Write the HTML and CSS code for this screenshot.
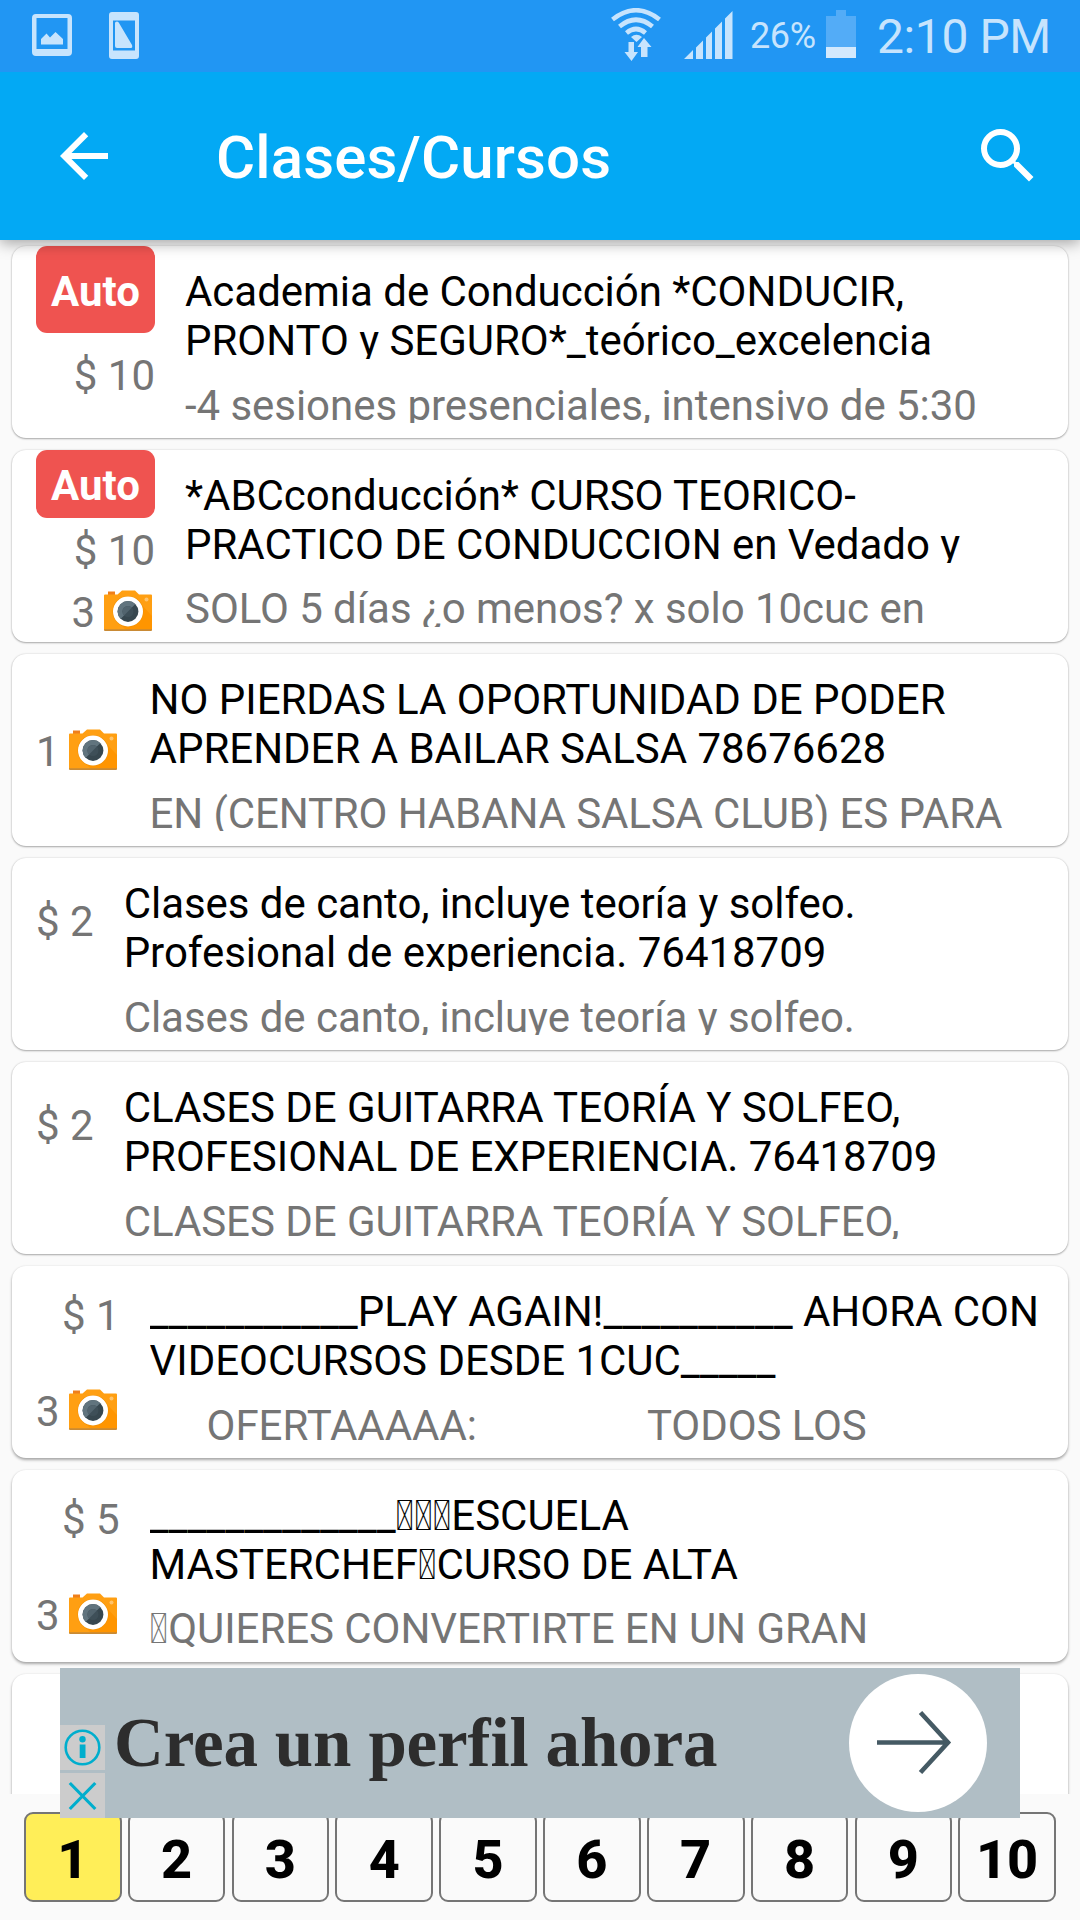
FILE: index.html
```html
<!DOCTYPE html>
<html lang="es">
<head>
<meta charset="utf-8">
<title>Clases/Cursos</title>
<link rel="stylesheet" href="styles.css">
</head>
<body>
<svg class="defs" width="0" height="0" aria-hidden="true">
  <symbol id="camera" viewBox="0 0 48 41">
    <path d="M4 1.500h7v4H4z" fill="#ef7f1a"/>
    <path d="M1 4.500h12.500L18 .5h13l4 4h12a1 1 0 0 1 1 1V40H0V5.500a1 1 0 0 1 1-1z" fill="#ff9f12"/>
    <path d="M35 12l13 14v14H22l-8-8z" fill="#ff9500"/>
    <path d="M0 39.300h48v.7q0 1-1 1H1q-1 0-1-1z" fill="#c98a35"/>
    <circle cx="42.500" cy="9.500" r="2" fill="#ffc36b"/>
    <circle cx="24" cy="21.500" r="15.500" fill="#f39000"/>
    <circle cx="24" cy="21.500" r="15" fill="#fff"/>
    <circle cx="24" cy="21.500" r="10.400" fill="#37474f"/>
    <path d="M16.600 28.900A10.400 10.400 0 0 1 31.400 14.100z" fill="#61747e"/>
    <circle cx="24" cy="21.500" r="5.500" fill="#3e4f58"/>
    <path d="M20.100 25.400A5.500 5.500 0 0 1 27.900 17.600z" fill="#52646e"/>
  </symbol>
</svg>

<header class="top">
  <div class="status">
    <svg class="ic-photo" width="40" height="42" viewBox="0 0 40 42"><path fill-rule="evenodd" d="M4 0h32a4 4 0 0 1 4 4v34a4 4 0 0 1-4 4H4a4 4 0 0 1-4-4V4a4 4 0 0 1 4-4zM4.500 4v31h31V4z"/><path d="M9 30.500V25l5.500-5.500 3.500 4 5.500-5.500L31 25v5.500z"/></svg>
    <svg class="ic-phone" width="30" height="47" viewBox="0 0 30 47"><path fill-rule="evenodd" d="M3 0h24a3 3 0 0 1 3 3v41a3 3 0 0 1-3 3H3a3 3 0 0 1-3-3V3a3 3 0 0 1 3-3zM4 8.500v30h22v-30z"/><path d="M6 11q0-1.500 2-1.500 1.500 0 2 1.500L23 33q.8 3-1 3H8q-2 0-2-2z"/></svg>
    <svg class="ic-wifi" width="50" height="53" viewBox="0 0 50 53"><g fill="none" stroke="#c7e4fd" stroke-width="4.600"><path d="M1.500 11.500Q25-7 48.500 11.500"/><path d="M8.500 18.500Q25 5 41.500 18.500"/><path d="M15.500 25Q25 17 34.500 25"/></g><path d="M20 29q5.500-4.500 11 0l-5.500 5zM17.500 34h5.500v10h4l-6.500 9-7-9h4z"/><path d="M30 49V39h-3.500l6.500-9 7.500 9H36.500v10z"/></svg>
    <svg class="ic-signal" width="49" height="48" viewBox="0 0 49 48"><path d="M0 48l9-9v9zM12 48V36.500l7-7V48zM22 48V26.500l6-6V48zM31 48V17.500l7-7V48zM41 48V7.500L48.500 0v48z"/></svg>
    <span class="battery-pct">26%</span>
    <svg class="ic-battery" width="30" height="48" viewBox="0 0 30 48"><path fill="#53acf7" d="M10 0h10v6h10v31H0V6h10z"/><path fill="#d3e9fd" d="M0 37h30v11H0z"/></svg>
    <time class="clock">2:10 PM</time>
  </div>
  <div class="appbar">
    <svg width="72" height="72" viewBox="0 0 24 24"><path d="M20 11H7.830l5.590-5.590L12 4l-8 8 8 8 1.410-1.410L7.830 13H20v-2z"/></svg>
    <h1>Clases/Cursos</h1>
    <svg width="72" height="72" viewBox="0 0 24 24"><path d="M15.500 14h-.79l-.28-.27A6.471 6.471 0 0 0 16 9.500 6.500 6.500 0 1 0 9.500 16c1.610 0 3.090-.59 4.230-1.570l.27.28v.79l5 4.990L20.490 19l-4.990-5zm-6 0C7.010 14 5 11.990 5 9.500S7.010 5 9.500 5 14 7.010 14 9.500 11.990 14 9.500 14z"/></svg>
  </div>
</header>

<main class="list">
  <article class="card">
    <div class="meta"><span class="badge badge-tall">Auto</span><span class="price price-mid">$ 10</span></div>
    <div class="body"><h2>Academia de Conducción *CONDUCIR,<br>PRONTO y SEGURO*_teórico_excelencia</h2><p>-4 sesiones presenciales, intensivo de 5:30</p></div>
  </article>
  <article class="card">
    <div class="meta"><span class="badge">Auto</span><span class="price price-snug">$ 10</span><span class="photos photos-snug">3<svg><use href="#camera"/></svg></span></div>
    <div class="body"><h2>*ABCconducción* CURSO TEORICO-<br>PRACTICO DE CONDUCCION en Vedado y</h2><p class="raised">SOLO 5 días ¿o menos? x solo 10cuc en</p></div>
  </article>
  <article class="card">
    <div class="meta"><span class="photos photos-only">1<svg><use href="#camera"/></svg></span></div>
    <div class="body"><h2>NO PIERDAS LA OPORTUNIDAD DE PODER<br>APRENDER A BAILAR SALSA 78676628</h2><p class="tight">EN (CENTRO HABANA SALSA CLUB) ES PARA</p></div>
  </article>
  <article class="card">
    <div class="meta"><span class="price price-only">$ 2</span></div>
    <div class="body"><h2>Clases de canto, incluye teoría y solfeo.<br>Profesional de experiencia. 76418709</h2><p>Clases de canto, incluye teoría y solfeo.</p></div>
  </article>
  <article class="card">
    <div class="meta"><span class="price price-only">$ 2</span></div>
    <div class="body"><h2>CLASES DE GUITARRA TEORÍA Y SOLFEO,<br>PROFESIONAL DE EXPERIENCIA. 76418709</h2><p>CLASES DE GUITARRA TEORÍA Y SOLFEO,</p></div>
  </article>
  <article class="card low">
    <div class="meta"><span class="price price-top">$ 1</span><span class="photos photos-low">3<svg><use href="#camera"/></svg></span></div>
    <div class="body"><h2>___________PLAY AGAIN!__________ AHORA CON<br>VIDEOCURSOS DESDE 1CUC_____</h2><p><span class="offer">OFERTAAAAA:</span><span>TODOS LOS</span></p></div>
  </article>
  <article class="card low">
    <div class="meta"><span class="price price-top">$ 5</span><span class="photos photos-low">3<svg><use href="#camera"/></svg></span></div>
    <div class="body"><h2>_____________&#xE000;&#xE000;&#xE000;ESCUELA<br>MASTERCHEF&#xE000;CURSO DE ALTA</h2><p class="raised">&#xE000;QUIERES CONVERTIRTE EN UN GRAN</p></div>
  </article>
  <article class="card low"></article>
</main>

<nav class="pager">
  <a class="page current">1</a><a class="page">2</a><a class="page">3</a><a class="page">4</a><a class="page">5</a><a class="page">6</a><a class="page">7</a><a class="page">8</a><a class="page">9</a><a class="page">10</a>
</nav>

<aside class="ad">
  <div class="ad-choices">
    <svg width="45" height="45" viewBox="0 0 45 45"><circle cx="22.500" cy="22.500" r="16.800" fill="none" stroke="#00aecd" stroke-width="2.600"/><circle cx="22.500" cy="14.200" r="3.200" fill="#00aecd"/><path d="M19.700 19.500h5.800V33h-5.800z" fill="#00aecd"/></svg>
    <svg width="45" height="45" viewBox="0 0 45 45"><path d="M9.800 10l25.500 26M35.300 10L9.800 36" stroke="#00aecd" stroke-width="3.200" fill="none"/></svg>
  </div>
  <span class="ad-text">Crea un perfil ahora</span>
  <svg class="ad-go" width="138" height="138" viewBox="0 0 138 138"><circle cx="69" cy="69" r="69" fill="#fff"/><path d="M28 68.500h72M71.500 38.500L99 68.500l-27.500 30" fill="none" stroke="#455a64" stroke-width="4.600"/></svg>
</aside>
</body>
</html>
```
FILE: styles.css
```css
* { box-sizing: border-box; }

body {
  margin: 0;
  width: 1080px;
  height: 1920px;
  position: relative;
  overflow: hidden;
  display: flex;
  flex-direction: column;
  background: #fafafa;
  font-family: Roboto, sans-serif;
  font-size: 42px;
  line-height: 49px;
}

.defs { position: absolute; }

.top {
  flex: none;
  position: relative;
  z-index: 1;
  box-shadow: 0 3px 14px rgba(0, 0, 0, .36);
}

.status {
  display: flex;
  align-items: flex-start;
  height: 72px;
  padding-left: 32px;
  background: #2196f3;
  color: #c7e4fd;
  fill: #c7e4fd;
}
.status > * { flex: none; }
.ic-photo { margin-top: 14px; }
.ic-phone { margin: 12px 0 0 37px; }
.ic-wifi { margin: 8px 0 0 472px; }
.ic-signal { margin: 11px 0 0 23px; }
.battery-pct { width: 67px; margin: 12px 0 0 17px; font-size: 36px; letter-spacing: -.4px; }
.ic-battery { margin: 10px 0 0 9px; }
.clock { margin: 12px 0 0 21px; font-size: 48px; letter-spacing: -.4px; white-space: nowrap; }

.appbar {
  display: flex;
  align-items: center;
  height: 168px;
  padding: 0 36px 0 48px;
  background: #03a9f4;
  color: #fff;
  fill: #fff;
}
.appbar h1 {
  flex: 1;
  margin: 4px 0 0 96px;
  font-size: 60px;
  font-weight: 500;
  letter-spacing: .12px;
  line-height: 70px;
}

.list {
  flex: none;
  height: 1554px;
  padding: 6px 12px 0;
  display: flex;
  flex-direction: column;
  gap: 12px;
  overflow: hidden;
}
.card {
  flex: none;
  display: flex;
  gap: 30px;
  height: 192px;
  padding: 0 24px;
  border-radius: 14px;
  background: #fff;
  box-shadow: 0 1px 2px rgba(0, 0, 0, .3), 0 0 2px rgba(0, 0, 0, .16);
}
.card.low { box-shadow: 0 2px 3px rgba(0, 0, 0, .32), 0 0 2px rgba(0, 0, 0, .1); }

.meta {
  display: flex;
  flex-direction: column;
  align-items: flex-end;
  color: #757575;
}
.badge {
  width: 119px;
  height: 68px;
  border-radius: 11px;
  background: #ef5350;
  color: #fff;
  font-weight: 700;
  line-height: 71px;
  text-align: center;
}
.badge-tall { height: 87px; line-height: 92px; }
.price-mid { margin-top: 18px; }
.price-snug { margin-top: 8px; }
.price-only { margin-top: 39px; }
.price-top { margin-top: 25px; }
.photos { display: flex; }
.photos svg { width: 48px; height: 41px; margin: 2px 3px 0 9px; }
.photos-snug { margin-top: 13px; }
.photos-only { margin-top: 73px; }
.photos-low { margin-top: 47px; }

.body { flex: 1; padding-top: 21px; white-space: nowrap; }
.body h2 {
  height: 92px;
  margin: 0;
  overflow: hidden;
  font-size: 42px;
  font-weight: 400;
  letter-spacing: -.03px;
  color: #000;
}
.body p {
  height: 42px;
  margin: 22px 0 0;
  overflow: hidden;
  letter-spacing: -.05px;
  color: #757575;
}
.body .raised { height: 43px; margin-top: 21px; }
.body .tight { letter-spacing: -.13px; }
.offer { margin: 0 170px 0 57px; }

.pager {
  display: flex;
  gap: 6.200px;
  padding: 18px 24px;
}
.page {
  flex: 1;
  height: 90px;
  border: 2px solid #757575;
  border-radius: 9px;
  font-size: 54px;
  font-weight: 800;
  line-height: 91px;
  text-align: center;
  color: #000;
}
.page.current { background: #ffee58; }

.ad {
  position: absolute;
  left: 60px;
  top: 1668px;
  z-index: 2;
  display: flex;
  align-items: center;
  width: 960px;
  height: 150px;
  padding-right: 33px;
  background: #b0bec5;
}
.ad-choices {
  align-self: flex-end;
  display: flex;
  flex-direction: column;
  gap: 3px;
}
.ad-choices svg { background: #ccc; }
.ad-text {
  flex: 1;
  margin-left: 9px;
  font-family: "Liberation Serif", serif;
  font-size: 69px;
  font-weight: 700;
  letter-spacing: -.15px;
  line-height: 80px;
  white-space: nowrap;
  color: #2d2d2d;
}
```
